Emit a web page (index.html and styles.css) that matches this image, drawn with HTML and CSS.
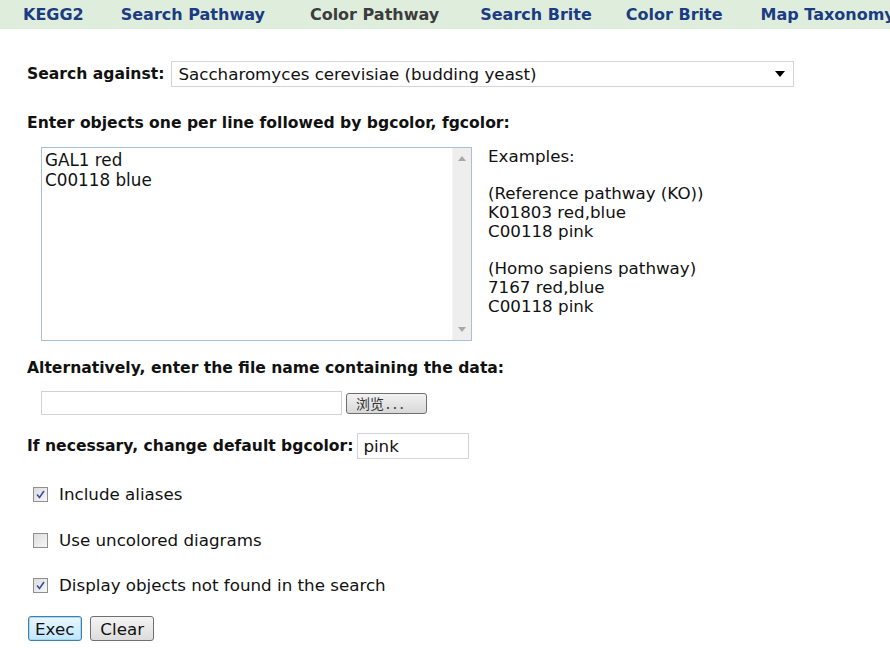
FILE: index.html
```html
<!DOCTYPE html>
<html>
<head>
<meta charset="utf-8">
<link rel="stylesheet" href="styles.css">
</head>
<body>
<nav class="nav">
  <a class="nav-item">KEGG2</a>
  <a class="nav-item">Search Pathway</a>
  <a class="nav-item current">Color Pathway</a>
  <a class="nav-item">Search Brite</a>
  <a class="nav-item">Color Brite</a>
  <a class="nav-item">Map Taxonomy</a>
</nav>
<main class="main">
  <div class="row search-row">
    <span class="label">Search against:</span>
    <div class="select">
      <span>Saccharomyces cerevisiae (budding yeast)</span>
      <svg class="arrow" width="10" height="6" viewBox="0 0 10 6"><path d="M0 0H10L5 6Z" fill="#000"/></svg>
    </div>
  </div>
  <div class="label section-title">Enter objects one per line followed by bgcolor, fgcolor:</div>
  <div class="objects">
    <div class="textarea">
      <div class="ta-text">GAL1 red<br>C00118 blue</div>
      <div class="scrollbar">
        <svg width="8" height="5" viewBox="0 0 8 5"><path d="M0 5L4 0L8 5Z" fill="#a8a8a8"/></svg>
        <svg width="8" height="5" viewBox="0 0 8 5"><path d="M0 0L4 5L8 0Z" fill="#a8a8a8"/></svg>
      </div>
    </div>
    <div class="examples">
      <p>Examples:</p>
      <p>(Reference pathway (KO))<br>K01803 red,blue<br>C00118 pink</p>
      <p>(Homo sapiens pathway)<br>7167 red,blue<br>C00118 pink</p>
    </div>
  </div>
  <div class="label section-title alt">Alternatively, enter the file name containing the data:</div>
  <div class="file-row">
    <div class="file-input"></div>
    <button class="browse">浏览<span class="dots">...</span></button>
  </div>
  <div class="row bg-row">
    <span class="label">If necessary, change default bgcolor:</span>
    <div class="text-input">pink</div>
  </div>
  <label class="check first"><span class="box"><svg width="9" height="9" viewBox="0 0 9 9"><path d="M1 4.5L3.5 7.5L8 1" fill="none" stroke="#3b4fa0" stroke-width="1.6"/></svg></span>Include aliases</label>
  <label class="check"><span class="box"></span>Use uncolored diagrams</label>
  <label class="check last"><span class="box"><svg width="9" height="9" viewBox="0 0 9 9"><path d="M1 4.5L3.5 7.5L8 1" fill="none" stroke="#3b4fa0" stroke-width="1.6"/></svg></span>Display objects not found in the search</label>
  <div class="buttons">
    <button class="btn focused">Exec</button>
    <button class="btn clear">Clear</button>
  </div>
</main>
</body>
</html>
```

FILE: styles.css
```css
html, body {
  margin: 0;
  padding: 0;
  background: #fff;
}
body {
  font-family: "DejaVu Sans", Verdana, sans-serif;
  font-size: 16.7px;
  color: #111;
}
.nav {
  display: flex;
  height: 29px;
  align-items: center;
  background: #dfeedc;
  padding-left: 23px;
  white-space: nowrap;
  overflow: hidden;
}
.nav-item {
  font-weight: bold;
  font-size: 16px;
  color: #1b3b83;
  flex: none;
}
.nav-item:nth-child(2) { margin-left: 37px; }
.nav-item:nth-child(3) { margin-left: 45px; }
.nav-item:nth-child(4) { margin-left: 41px; }
.nav-item:nth-child(5) { margin-left: 34px; }
.nav-item:nth-child(6) { margin-left: 38px; }
.nav-item.current {
  color: #3c3c3c;
}
.main {
  padding-left: 27px;
}
.label {
  font-weight: bold;
  font-size: 15.6px;
  color: #111;
}
.row {
  display: flex;
  align-items: center;
}
.search-row {
  margin-top: 32px;
}
.select {
  margin-left: 7px;
  width: 623px;
  height: 26px;
  box-sizing: border-box;
  border: 1px solid #d4d4d4;
  display: flex;
  align-items: center;
  justify-content: space-between;
  padding: 0 8px 0 6px;
  font-size: 16.7px;
}
.section-title {
  margin-top: 27px;
}
.objects {
  display: flex;
  margin-top: 15px;
  margin-left: 14px;
}
.textarea {
  width: 431px;
  height: 194px;
  box-sizing: border-box;
  border: 1px solid #a9bfd6;
  display: flex;
  justify-content: space-between;
}
.ta-text {
  padding: 2px 0 0 3px;
  font-size: 16.8px;
  line-height: 20px;
}
.scrollbar {
  width: 19px;
  background: #eeeeee;
  border-left: 1px solid #f4f4f4;
  display: flex;
  flex-direction: column;
  justify-content: space-between;
  align-items: center;
  padding: 8px 0;
  box-sizing: border-box;
}
.examples {
  margin-left: 16px;
  font-size: 16.7px;
  line-height: 19px;
}
.examples p {
  margin: 0 0 18px 0;
}
.alt {
  margin-top: 18px;
}
.file-row {
  display: flex;
  align-items: center;
  margin-top: 14px;
  margin-left: 14px;
}
.file-input {
  width: 301px;
  height: 24px;
  box-sizing: border-box;
  border: 1px solid #d2d2d2;
}
.browse {
  margin-left: 4px;
  width: 81px;
  height: 21px;
  border: 1px solid #707070;
  border-radius: 3px;
  background: linear-gradient(#f2f2f2, #d8d8d8);
  font-family: "Noto Sans CJK SC", sans-serif;
  font-size: 14px;
  color: #333;
  text-align: left;
  padding: 0 0 0 9px;
  line-height: 18px;
}
.dots {
  letter-spacing: 3px;
  margin-left: 2px;
}
.bg-row {
  margin-top: 18px;
}
.text-input {
  margin-left: 4px;
  width: 112px;
  height: 26px;
  box-sizing: border-box;
  border: 1px solid #d4d4d4;
  font-size: 16.7px;
  padding: 2px 0 0 5px;
}
.check {
  display: flex;
  align-items: center;
  margin-left: 6px;
  height: 20px;
  margin-top: 26px;
}
.check.first {
  margin-top: 25px;
}
.check.last {
  margin-top: 25px;
}
.box {
  width: 13px;
  height: 13px;
  border: 1px solid #8f8f8f;
  background: linear-gradient(135deg, #dcdcdc, #f7f7f7);
  margin-right: 11px;
  display: flex;
  align-items: center;
  justify-content: center;
  flex: none;
}
.buttons {
  display: flex;
  gap: 8px;
  margin-top: 21px;
  margin-left: 1px;
}
.btn {
  height: 25px;
  font-family: "DejaVu Sans", Verdana, sans-serif;
  font-size: 16.7px;
  color: #111;
  border: 1px solid #707070;
  border-radius: 3px;
  background: linear-gradient(#f4f4f4, #dcdcdc);
  padding: 0 7px 0 6px;
}
.btn.clear {
  padding: 0 9px;
}
.btn.focused {
  border-color: #3c7fb1;
  box-shadow: inset 0 0 0 1px #a6d8f2;
  background: linear-gradient(#eaf6fd, #bee6fd);
}
```
